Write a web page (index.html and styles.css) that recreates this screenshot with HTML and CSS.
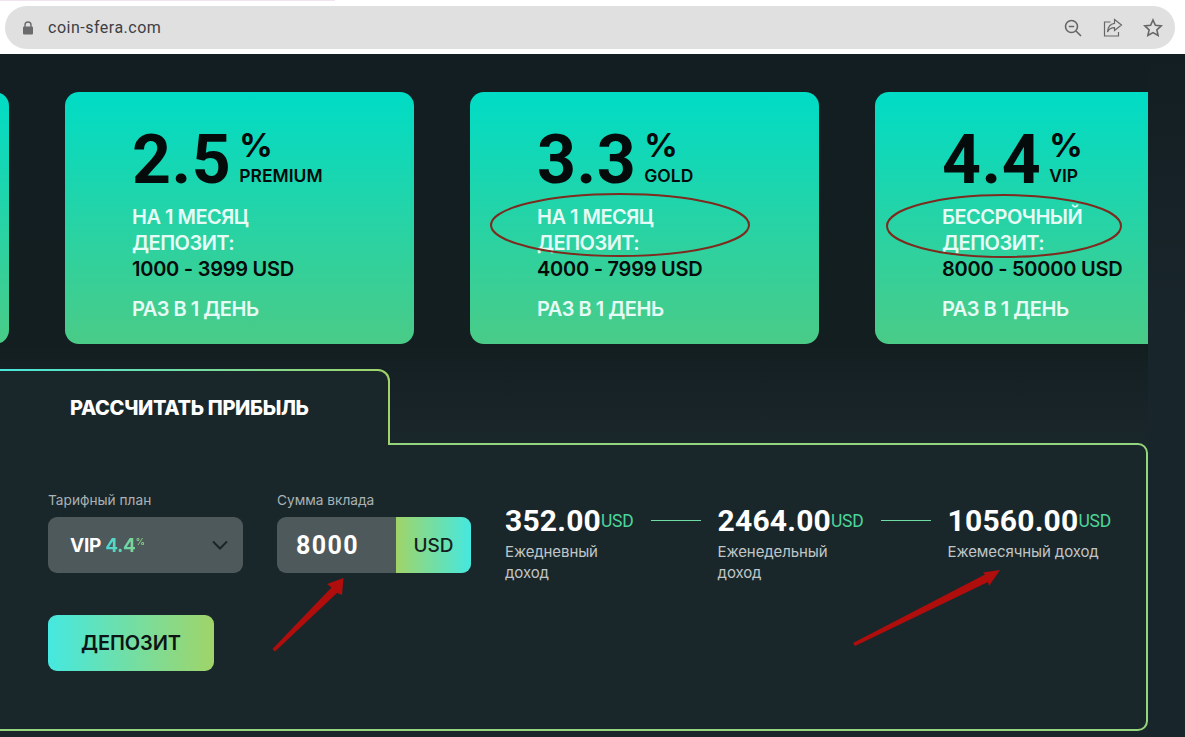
FILE: index.html
```html
<!DOCTYPE html>
<html lang="ru">

<head>
    <meta charset="UTF-8">
    <meta name="viewport" content="width=device-width, initial-scale=1.0">
    <title>coin-sfera.com</title>
    <link rel="stylesheet" href="styles.css">
</head>

<body>
    <div class="browser">
        <div class="tab-strip"></div>
        <div class="address">
            <svg class="lock" width="12" height="14" viewBox="0 0 12 14">
                <path d="M3 6V4a3 3 0 0 1 6 0v2" fill="none" stroke="#6b6b6d" stroke-width="1.4" />
                <rect x="1" y="5.5" width="10" height="8" rx="1" fill="#6b6b6d" />
            </svg>
            <span class="url">coin-sfera.com</span>
            <div class="address-icons">
                <svg width="20" height="20" viewBox="0 0 20 20" fill="none" stroke="#666" stroke-width="1.6">
                    <circle cx="8.5" cy="8.5" r="6" />
                    <path d="M5.8 8.5h5.4M13 13l5 5" />
                </svg>
                <svg width="20" height="20" viewBox="0 0 20 20" fill="none" stroke="#666" stroke-width="1.2">
                    <path d="M7.5 4H1.5v14h14v-4" />
                    <path d="M11.5 1.5l7 5.5-7 5.5V9.6C8 9.6 5.8 11 4.5 14c.3-5 3-8.200 7-8.700z" />
                </svg>
                <svg width="20" height="20" viewBox="0 0 20 20" fill="none" stroke="#666" stroke-width="1.6">
                    <path d="M10 2l2.400 5.300 5.800.6-4.300 3.900 1.200 5.700L10 14.600l-5.100 2.900 1.200-5.700L1.800 7.900l5.800-.6z" />
                </svg>
            </div>
        </div>
    </div>

    <div class="page">
        <div class="content">
            <div class="cards">
                <div class="cards-track">
                    <div class="card"></div>
                    <div class="card">
                        <div class="rate">
                            <span class="rate-num">2.5</span>
                            <span class="rate-side"><span class="pct">%</span><span class="plan">PREMIUM</span></span>
                        </div>
                        <p class="light">НА 1 МЕСЯЦ<br>ДЕПОЗИТ:</p>
                        <p class="range">1000 - 3999 USD</p>
                        <p class="light every">РАЗ В 1 ДЕНЬ</p>
                    </div>
                    <div class="card">
                        <div class="rate">
                            <span class="rate-num">3.3</span>
                            <span class="rate-side"><span class="pct">%</span><span class="plan">GOLD</span></span>
                        </div>
                        <p class="light">НА 1 МЕСЯЦ<br>ДЕПОЗИТ:</p>
                        <p class="range">4000 - 7999 USD</p>
                        <p class="light every">РАЗ В 1 ДЕНЬ</p>
                    </div>
                    <div class="card">
                        <div class="rate">
                            <span class="rate-num">4.4</span>
                            <span class="rate-side"><span class="pct">%</span><span class="plan">VIP</span></span>
                        </div>
                        <p class="light">БЕССРОЧНЫЙ<br>ДЕПОЗИТ:</p>
                        <p class="range">8000 - 50000 USD</p>
                        <p class="light every">РАЗ В 1 ДЕНЬ</p>
                    </div>
                </div>
            </div>

            <div class="calc">
                <div class="calc-tab">РАССЧИТАТЬ ПРИБЫЛЬ</div>
                <div class="calc-panel">
                    <div class="calc-left">
                        <div class="fields">
                            <div class="field">
                                <label>Тарифный план</label>
                                <div class="select">
                                    <span class="select-value">VIP <em>4.4<sup>%</sup></em></span>
                                    <svg width="16" height="10" viewBox="0 0 16 10" fill="none" stroke="#1b2528" stroke-width="2">
                                        <path d="M1 1.500l7 7 7-7" />
                                    </svg>
                                </div>
                            </div>
                            <div class="field">
                                <label>Сумма вклада</label>
                                <div class="amount">
                                    <span class="amount-value">8000</span>
                                    <span class="amount-cur">USD</span>
                                </div>
                            </div>
                        </div>
                        <button type="button" class="deposit">ДЕПОЗИТ</button>
                    </div>
                    <div class="results">
                        <div class="result">
                            <div class="sum">352.00<span>USD</span></div>
                            <div class="sum-label">Ежедневный<br>доход</div>
                        </div>
                        <div class="dash"></div>
                        <div class="result">
                            <div class="sum">2464.00<span>USD</span></div>
                            <div class="sum-label">Еженедельный<br>доход</div>
                        </div>
                        <div class="dash"></div>
                        <div class="result">
                            <div class="sum">10560.00<span>USD</span></div>
                            <div class="sum-label">Ежемесячный доход</div>
                        </div>
                    </div>
                </div>
            </div>
        </div>
    </div>

    <!-- пометки поверх скриншота -->
    <svg class="marks" width="1185" height="737" viewBox="0 0 1185 737" fill="none">
        <ellipse cx="620" cy="225" rx="129" ry="31" stroke="#7e2a1e" stroke-width="2" />
        <ellipse cx="1004" cy="226" rx="117" ry="31" stroke="#7e2a1e" stroke-width="2" />
        <path d="M272.500 649L275 651.500 337 593 342 595 343.500 578 327 584 331.500 587.500z" fill="#b00d0d" />
        <path d="M853 643L855 646 988 582 989 586 1000 570 983 572.500 985 574.500z" fill="#b00d0d" />
    </svg>
</body>

</html>
```

FILE: styles.css
```css
* {
    box-sizing: border-box;
}

html,
body {
    height: 737px;
    overflow: hidden;
}

body {
    margin: 0;
    padding: 0;
    position: relative;
    background: #fff;
    font-family: Inter, "Noto Sans", sans-serif;
}

p {
    margin: 0;
}

.browser {
    height: 54px;
    padding: 6px 10px 0 5px;
    position: relative;
}

.tab-strip {
    position: absolute;
    top: 0;
    left: 0;
    width: 335px;
    height: 1px;
    background: #f0e4f0;
}

.address {
    height: 43px;
    border-radius: 22px;
    background: #e0e0e1;
    display: flex;
    align-items: center;
    padding: 0 12px 0 17px;
}

.lock {
    margin-right: 14px;
}

.url {
    font-family: Roboto, sans-serif;
    font-size: 16px;
    color: #3c3f43;
    letter-spacing: 0.5px;
}

.address-icons {
    margin-left: auto;
    display: flex;
    gap: 20px;
    align-items: center;
}

.page {
    height: 683px;
    background: linear-gradient(180deg, #131e22 0, #18252a 260px);
}

.content {
    width: 1148px;
    height: 100%;
    background: linear-gradient(180deg, #131e22 0, #131e21 290px, #1a272a 390px);
}

.cards {
    padding-top: 38px;
    overflow: hidden;
}

.cards-track {
    display: flex;
    gap: 56px;
    margin-left: -340px;
}

.card {
    flex: 0 0 349px;
    height: 252px;
    border-radius: 14px;
    padding: 36px 0 0 67px;
    background: linear-gradient(180deg, #00dcc6 0, #4acb87 100%);
    font-size: 20px;
    font-weight: 600;
    line-height: 26px;
    letter-spacing: -0.5px;
}

.rate {
    display: flex;
    align-items: flex-end;
    gap: 8px;
    height: 64px;
    margin-bottom: 12px;
    color: #050a0a;
}

.rate-num {
    font-family: Roboto, sans-serif;
    font-size: 68px;
    font-weight: 700;
    line-height: 64px;
    letter-spacing: 0.5px;
}

.rate-side {
    display: flex;
    flex-direction: column;
    margin-bottom: 5px;
}

.pct {
    font-size: 33px;
    line-height: 32px;
    margin-bottom: 4px;
    font-weight: 700;
    letter-spacing: 0;
}

.plan {
    font-size: 17.500px;
    line-height: 22px;
    font-weight: 600;
    letter-spacing: 0;
}

.light {
    color: #e6fbf5;
}

.range {
    color: #050a0a;
    letter-spacing: -0.25px;
}

.every {
    margin-top: 14px;
}

.calc {
    margin-top: 25px;
    position: relative;
}

.calc-tab {
    width: 400px;
    height: 76px;
    margin-left: -10px;
    margin-bottom: -2px;
    position: relative;
    z-index: 1;
    padding: 25px 0 0 80px;
    border: 2px solid transparent;
    border-bottom: 0;
    border-left: 0;
    border-radius: 0 12px 0 0;
    background: linear-gradient(#1a272a, #1a272a) padding-box, linear-gradient(90deg, #45e8e0, #a0d468) border-box;
    color: #fff;
    font-size: 20px;
    font-weight: 800;
    line-height: 24px;
    letter-spacing: -0.35px;
}

.calc-panel {
    height: 288px;
    margin-left: -10px;
    border: 2px solid #95d57e;
    border-radius: 0 10px 10px 0;
    background: #1a272a;
    padding: 46px 0 0 56px;
    display: flex;
}

.calc-left {
    width: 423px;
    flex: none;
}

.fields {
    display: flex;
    gap: 34px;
}

.field label {
    display: block;
    color: #a9b2b4;
    font-size: 13.700px;
    line-height: 18px;
    margin-bottom: 8px;
}

.select {
    width: 195px;
    height: 56px;
    border-radius: 9px;
    background: #4e595c;
    display: flex;
    align-items: center;
    justify-content: space-between;
    padding: 0 15px 0 22px;
}

.select-value {
    color: #fff;
    font-size: 19px;
    font-weight: 700;
    letter-spacing: -0.3px;
    margin-top: 1px;
}

.select-value em {
    font-style: normal;
    background: linear-gradient(90deg, #45d8d8, #90d47c);
    -webkit-background-clip: text;
    background-clip: text;
    color: transparent;
}

.select-value sup {
    font-size: 9px;
    line-height: 0;
}

.amount {
    width: 194px;
    height: 56px;
    border-radius: 9px;
    overflow: hidden;
    display: flex;
    background: #4e595c;
}

.amount-value {
    width: 119px;
    padding-left: 19px;
    color: #fff;
    font-size: 25px;
    font-weight: 700;
    line-height: 58px;
    font-family: Roboto, sans-serif;
    letter-spacing: 1.400px;
}

.amount-cur {
    flex: 1;
    text-align: center;
    line-height: 57px;
    font-size: 19px;
    font-weight: 500;
    color: #16211f;
    background: linear-gradient(90deg, #a0d468, #45e8e0);
}

.deposit {
    display: block;
    width: 166px;
    height: 56px;
    margin-top: 42px;
    border: 0;
    border-radius: 9px;
    background: linear-gradient(90deg, #45e8e0, #a0d468);
    color: #0d1514;
    font-family: Inter, sans-serif;
    font-size: 20px;
    font-weight: 600;
    letter-spacing: -0.1px;
}

.results {
    display: flex;
    align-items: flex-start;
    margin-left: 34px;
    margin-top: 12px;
}

.result {
    flex: none;
}

.sum {
    font-family: Roboto, sans-serif;
    font-size: 30px;
    font-weight: 700;
    line-height: 36px;
    color: #fff;
    letter-spacing: 0.2px;
    white-space: nowrap;
}

.sum span {
    font-size: 17.500px;
    font-weight: 400;
    letter-spacing: -0.2px;
    color: #4bd49a;
    position: relative;
    top: -4px;
}

.sum-label {
    color: #c0c6c7;
    font-size: 15px;
    line-height: 21px;
    margin-top: -2px;
    letter-spacing: -0.1px;
}

.dash {
    flex: none;
    width: 50px;
    height: 1px;
    margin: 17px 17px 0;
    background: #6fdca6;
}

.marks {
    position: absolute;
    top: 0;
    left: 0;
    pointer-events: none;
}
```
